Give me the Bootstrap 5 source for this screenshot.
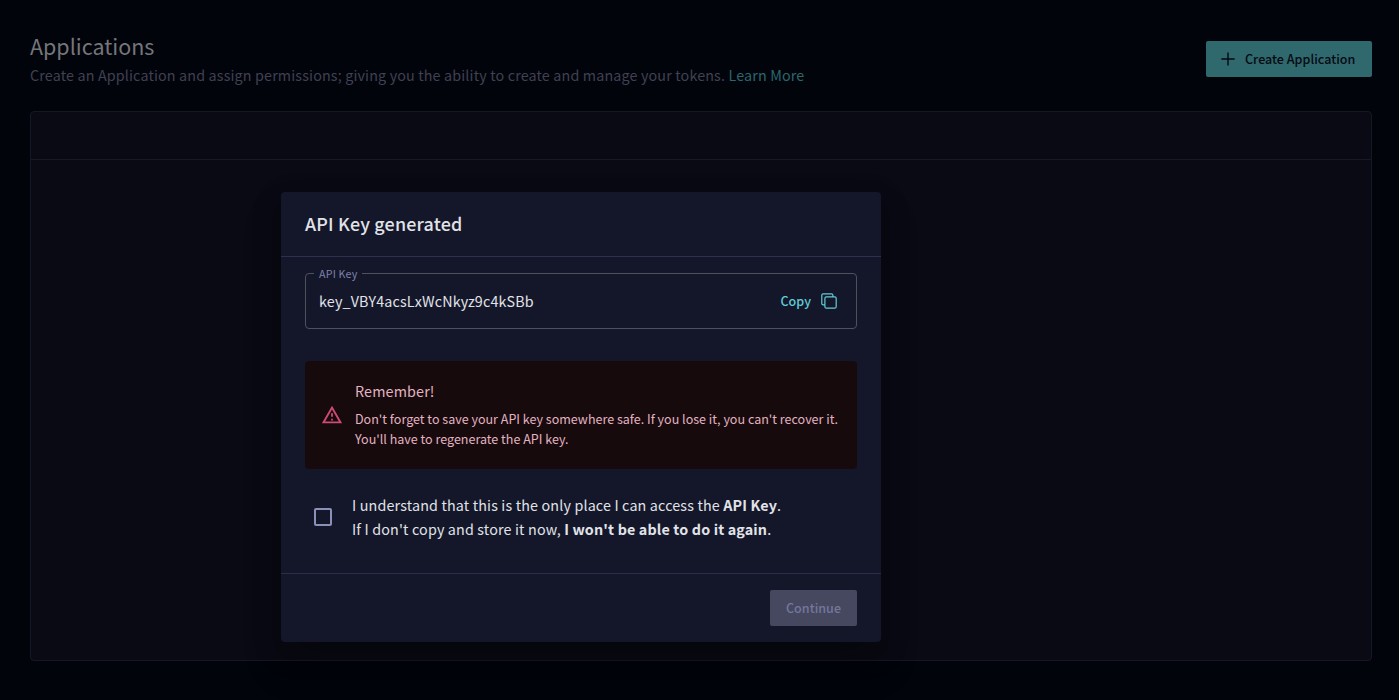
<!DOCTYPE html>
<html lang="en">
<head>
<meta charset="utf-8">
<meta name="viewport" content="width=device-width, initial-scale=1">
<title>Applications</title>
<link href="https://cdn.jsdelivr.net/npm/bootstrap@5.3.0/dist/css/bootstrap.min.css" rel="stylesheet">
<style>
  body { background:#02040c; font-family:"Noto Sans CJK SC","Noto Sans",sans-serif; font-size:14.32px; line-height:24px; letter-spacing:.152px; }
  .page { height:700px; padding:30px 27px 39px 30px; }
  .page-title { font-size:21.48px; line-height:32px; letter-spacing:0; font-weight:400; color:#757679; padding-bottom:1px; }
  .page-sub { color:#404152; }
  .page-sub a { color:#2b676d; }
  .btn { --bs-btn-border-width:0; --bs-btn-border-radius:2px; height:36px; font-size:12.53px; line-height:20px; letter-spacing:.03px; font-weight:500; }
  .btn-create, .btn-create:hover { width:166px; margin-top:11px; background:#2f686d; color:#040a12; }
  .btn-create svg { margin-left:15px; }
  .btn-create span { margin-left:10px; }
  .panel { background:#0a0a14; border:1px solid #161722; border-radius:4px; margin-top:24px; }
  .panel-bar { height:48px; border-bottom:1px solid #181925; }
  .overlay { inset:0 auto auto 0; width:1162px; height:834px; }
  .page-wrap { height:700px; }
  .modal-content { width:600px; height:450px; background:#14172a; border:0; border-radius:4px; color:#e1e3e8;
    box-shadow:0 11px 15px -7px rgba(0,0,0,.2),0 24px 38px 3px rgba(0,0,0,.14),0 9px 30px 2px rgba(0,0,0,.14); }
  .modal-header { height:65px; padding:0 24px 2px; border-bottom:1px solid #2d3050; border-radius:0; }
  .modal-title { font-size:17.9px; line-height:32px; font-weight:500; letter-spacing:.19px; padding-bottom:1px; }
  .modal-body { padding:16px 24px 0; }
  .modal-footer { height:69px; padding:0 24px; border-top:1px solid #2b2e48; border-radius:0; }
  .modal-footer > * { margin:0; }
  .key-field { height:56px; border:1px solid #4f505e; border-radius:4px; padding:0 19px 0 13px; }
  .key-label { left:8px; top:-10px; padding:0 5px; background:#14172a; color:#7d81a9; font-size:10.74px; line-height:20px; }
  .btn-copy, .btn-copy:hover { color:#60cdd7; padding:0; }
  .btn-copy svg { margin-left:10px; }
  .notice { height:108px; margin-top:32px; padding:0 16px; background:#170a0d; border-radius:4px; color:#e2b3c0; }
  .notice-title { margin-top:-2px; margin-bottom:6px; }
  .notice-text { font-size:12.53px; line-height:20px; letter-spacing:.007px; }
  .confirm { margin-top:24px; padding-left:9px; }
  .form-check-input { width:18px; height:18px; border:2px solid #8b90b8; background-color:transparent; }
  .form-check-input[type=checkbox] { border-radius:2px; }
  .btn-continue:disabled { width:87px; background:#464860; color:#75779c; opacity:1; }
</style>
</head>
<body>
<div class="page-wrap position-relative overflow-hidden">
  <main class="page d-flex flex-column">
    <header class="d-flex justify-content-between align-items-start">
      <div>
        <h1 class="page-title mb-0">Applications</h1>
        <p class="page-sub mb-0">Create an Application and assign permissions; giving you the ability to create and manage your tokens. <a href="#" class="text-decoration-none">Learn More</a></p>
      </div>
      <button type="button" class="btn btn-create d-flex align-items-center p-0">
        <svg width="14" height="14" viewBox="0 0 14 14" fill="none" stroke="currentColor" stroke-width="1.400"><path d="M7 .4v13.200M.3 7h13.400"/></svg>
        <span>Create Application</span>
      </button>
    </header>
    <section class="panel flex-grow-1"><div class="panel-bar"></div></section>
  </main>

  <div class="overlay position-absolute d-flex align-items-center justify-content-center">
    <div class="modal-content" role="dialog" aria-labelledby="dlg-title">
      <div class="modal-header"><h2 class="modal-title" id="dlg-title">API Key generated</h2></div>
      <div class="modal-body">
        <div class="key-field position-relative d-flex align-items-center justify-content-between">
          <span class="key-label position-absolute">API Key</span>
          <span>key_VBY4acsLxWcNkyz9c4kSBb</span>
          <button type="button" class="btn btn-copy d-flex align-items-center">
            <span>Copy</span>
            <svg width="16" height="16" viewBox="0 0 16 16" fill="none" stroke="currentColor" stroke-width="1.2"><rect x="3.900" y="3.900" width="11.300" height="11.300" rx="1.500"/><path d="M3.900 11.900H2.200A1.400 1.400 0 0 1 .8 10.500V2.200A1.400 1.400 0 0 1 2.200.8h8.300a1.400 1.400 0 0 1 1.400 1.400v1.700"/></svg>
          </button>
        </div>
        <div class="notice d-flex align-items-center" role="alert">
          <svg class="flex-shrink-0" width="22" height="22" viewBox="0 0 24 24" fill="#cf4a74"><path d="M12 5.990 19.530 19H4.470L12 5.990M12 2 1 21h22L12 2zm1 14h-2v2h2v-2zm0-6h-2v4h2v-4z"/></svg>
          <div class="ms-2 ps-1">
            <div class="notice-title">Remember!</div>
            <div class="notice-text">Don't forget to save your API key somewhere safe. If you lose it, you can't recover it.<br>You'll have to regenerate the API key.</div>
          </div>
        </div>
        <div class="confirm d-flex align-items-center">
          <input class="form-check-input m-0" type="checkbox" id="ack">
          <label for="ack" class="ms-3 ps-1">I understand that this is the only place I can access the <b>API Key</b>.<br>If I don't copy and store it now, <b>I won't be able to do it again</b>.</label>
        </div>
      </div>
      <div class="modal-footer"><button type="button" class="btn btn-continue p-0" disabled>Continue</button></div>
    </div>
  </div>
</div>
<script src="https://cdn.jsdelivr.net/npm/bootstrap@5.3.0/dist/js/bootstrap.bundle.min.js"></script>
</body>
</html>
